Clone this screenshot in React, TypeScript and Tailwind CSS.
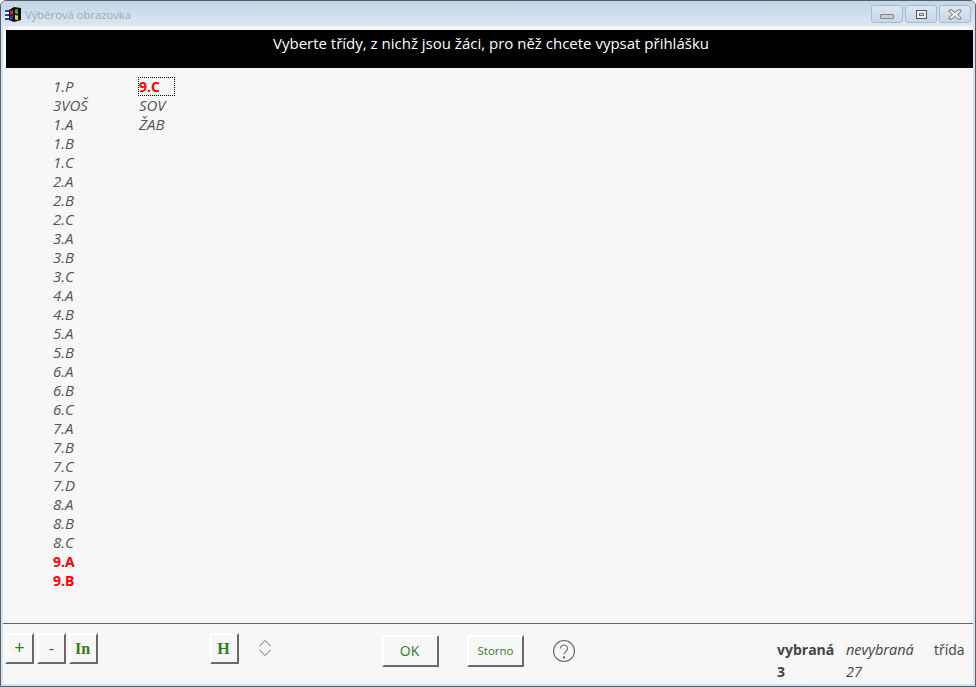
const firstColumn = [
  '1.P', '3VOŠ', '1.A', '1.B', '1.C', '2.A', '2.B', '2.C', '3.A', '3.B', '3.C', '4.A', '4.B', '5.A', '5.B',
  '6.A', '6.B', '6.C', '7.A', '7.B', '7.C', '7.D', '8.A', '8.B', '8.C', '9.A', '9.B',
];
const selected = ['9.A', '9.B', '9.C'];

function ClassRow({ name, focused }: { name: string; focused?: boolean }) {
  const isSelected = selected.includes(name);
  return (
    <div className="relative h-[19px] leading-[19px]">
      <span className={isSelected ? 'font-bold text-[14px] text-[#ff0000]' : 'italic text-[15px] text-[#555555]'}>{name}</span>
      {focused && <div className="absolute left-[-1px] top-0 w-[37px] h-[19px] border border-dotted border-black" />}
    </div>
  );
}

function RaisedButton({ children, className }: { children: React.ReactNode; className: string }) {
  return (
    <div className={`flex items-center justify-center bg-[#f7f7f7] border-t-2 border-l-2 border-t-white border-l-white border-r-2 border-b-2 border-r-[#696969] border-b-[#696969] text-[#2f7d14] ${className}`}>
      {children}
    </div>
  );
}

function CaptionButton({ children, className }: { children: React.ReactNode; className?: string }) {
  return (
    <div className={`flex items-center justify-center w-[32px] h-[18px] rounded-[3px] border border-[#a9bacd] bg-gradient-to-b from-[#dbe6f1] to-[#c8d7e6] ${className ?? ''}`}>
      {children}
    </div>
  );
}

export default function App() {
  return (
    <div className="w-[976px] h-[687px] overflow-hidden flex flex-col bg-[#d5e2ef] border border-[#5a5f66] rounded-t-[6px] font-['Open_Sans','Noto_Sans',sans-serif] text-[14px]">
      {/* title bar */}
      <div className="h-[25px] shrink-0 flex items-start pl-[4px] pr-[4px] pt-[5px] bg-gradient-to-b from-[#c3d4e6] to-[#dbe7f2]">
        <svg width="17" height="17" viewBox="0 0 17 17" className="shrink-0">
          <path d="M4 4L9 1l7 1v12l-7 2-5-2z" fill="#0c0c0c" />
          <path d="M0 4h4v2H0zM0 8h4v2H0zM0 12h4v2H0z" fill="#2a3fd0" />
          <path d="M0 6h4v2H0zM0 10h4v2H0z" fill="#ffffff" />
          <path d="M5 5l3-1v4l-3 1z" fill="#e02020" />
          <path d="M10 3l3 .5V8l-3-.5z" fill="#28b040" />
          <path d="M5 10l3-1v4l-3 1z" fill="#2a3fd0" />
          <path d="M10 9l3 .5V14l-3-.5z" fill="#ecd020" />
        </svg>
        <span className="ml-[3px] text-[11.25px] leading-[18px] text-[#a3a8ad]">Výběrová obrazovka</span>
        <div className="ml-auto flex gap-[2px] mt-[-1px]">
          <CaptionButton>
            <div className="w-[14px] h-[5px] mt-[4px] bg-[#c9cbcd] border border-[#84868a] rounded-[1px]" />
          </CaptionButton>
          <CaptionButton className="border-[#8ca0b8]">
            <div className="w-[11px] h-[9px] border border-[#53565a] flex items-center justify-center bg-[#e8eef4]">
              <div className="w-[5px] h-[3px] border border-[#70747a]" />
            </div>
          </CaptionButton>
          <CaptionButton>
            <svg width="14" height="11" viewBox="0 0 14 11">
              <path d="M1 1h3l3 2.5L10 1h3v1.5L9.5 5.5 13 8.5V10h-3L7 7.5 4 10H1V8.5l3.5-3L1 2.5z" fill="#e9ecef" stroke="#74777b" strokeWidth="1" />
            </svg>
          </CaptionButton>
        </div>
      </div>

      {/* client area */}
      <div className="flex-1 min-h-0 flex flex-col ml-[2px] mr-[2px] mb-[2px] bg-[#f7f7f7]">
        <div className="ml-[3px] mt-[4px] h-[38px] shrink-0 flex justify-center pt-[3px] pl-[3px] bg-black text-white text-[15px] leading-[20px]">
          Vyberte třídy, z nichž jsou žáci, pro něž chcete vypsat přihlášku
        </div>

        <div className="flex-1 min-h-0 flex pl-[50px] pt-[9px]">
          <div className="w-[86px]">
            {firstColumn.map(name => (
              <ClassRow key={name} name={name} />
            ))}
          </div>
          <div>
            <ClassRow name="9.C" focused />
            <ClassRow name="SOV" />
            <ClassRow name="ŽAB" />
          </div>
        </div>

        <div className="h-[61px] shrink-0 flex border-t border-t-[#666666]">
          <div className="flex gap-[3px] pl-[2px] pt-[9px]">
            <RaisedButton className="w-[29px] h-[31px] font-['Liberation_Serif',serif] font-bold text-[18px]">+</RaisedButton>
            <RaisedButton className="w-[29px] h-[31px] font-['Liberation_Serif',serif] text-[16px]">-</RaisedButton>
            <RaisedButton className="w-[29px] h-[31px] pr-[2px] font-['Liberation_Serif',serif] font-bold text-[16px]">In</RaisedButton>
          </div>
          <div className="pl-[112px] pt-[9px]">
            <RaisedButton className="w-[29px] h-[31px] pr-[2px] font-['Liberation_Serif',serif] font-bold text-[16px]">H</RaisedButton>
          </div>
          <svg width="14" height="18" viewBox="0 0 14 18" className="ml-[19px] mt-[15px]" fill="none" stroke="#666666" strokeWidth="1">
            <path d="M1.5 7L7 1.5 12.5 7M1.5 11L7 16.5 12.5 11" />
          </svg>
          <RaisedButton className="ml-[110px] mt-[11px] w-[57px] h-[32px] pr-[2px] pb-[2px] text-[14px]">OK</RaisedButton>
          <RaisedButton className="ml-[28px] mt-[11px] w-[57px] h-[32px] text-[11.5px]">Storno</RaisedButton>
          <svg width="24" height="24" viewBox="0 0 24 24" className="ml-[28px] mt-[15px]" fill="none" stroke="#666666" strokeWidth="1.1">
            <circle cx="12" cy="12" r="10.5" />
            <path d="M8.5 9.5a3.5 3.5 0 1 1 5.6 2.8c-1.3 1-2.1 1.6-2.1 3.2" />
            <circle cx="12" cy="18.5" r="0.6" fill="#666666" />
          </svg>
          <div className="ml-auto pr-[5px] pt-[16px] grid grid-cols-[69px_88px_34px] grid-rows-[22px_22px] leading-[20px] text-[#444444]">
            <span className="font-bold">vybraná</span>
            <span className="italic text-[14.5px]">nevybraná</span>
            <span>třída</span>
            <span className="font-bold">3</span>
            <span className="italic text-[14.5px]">27</span>
          </div>
        </div>
      </div>
    </div>
  );
}
